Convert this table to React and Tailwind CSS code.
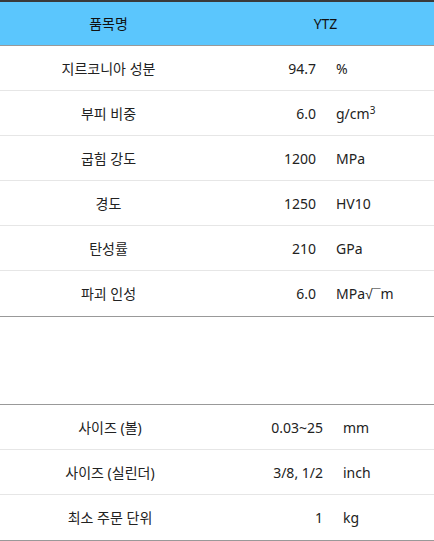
const specs = [
  { label: '지르코니아 성분', value: '94.7', unit: '%' },
  { label: '부피 비중', value: '6.0', unit: <>g/cm<sup className="text-[10px]">3</sup></> },
  { label: '굽힘 강도', value: '1200', unit: 'MPa' },
  { label: '경도', value: '1250', unit: 'HV10' },
  { label: '탄성률', value: '210', unit: 'GPa' },
  {
    label: '파괴 인성',
    value: '6.0',
    unit: <>MPa<span className="font-['Liberation_Sans']">√¯</span>m</>,
  },
]

const sizes = [
  { label: '사이즈 (볼)', value: '0.03~25', unit: 'mm' },
  { label: '사이즈 (실린더)', value: '3/8, 1/2', unit: 'inch' },
  { label: '최소 주문 단위', value: '1', unit: 'kg' },
]

function Row({ row, last, labelW, valueW }) {
  return (
    <div className={`flex h-[45px] items-center ${last ? '' : 'border-b border-[#e6e6e6]'}`}>
      <div className={`${labelW} text-center`}>{row.label}</div>
      <div className={`${valueW} pr-[10px] text-right`}>{row.value}</div>
      <div className="flex-1 pl-[10px]">{row.unit}</div>
    </div>
  )
}

export default function App() {
  return (
    <div
      className="w-[434px] bg-white text-[14px] text-[#222]"
      style={{ fontFamily: '"Noto Sans", "Noto Sans CJK KR", sans-serif' }}
    >
      <div className="border-t-2 border-[#3a3a3a] border-b border-b-[#999]">
        <div className="flex h-[43px] items-center bg-[#5bc6fd] text-[#111]">
          <div className="w-[217px] text-center">품목명</div>
          <div className="flex-1 text-center">YTZ</div>
        </div>
      </div>
      <div className="border-b border-[#999]">
        {specs.map((r, i) => (
          <Row key={r.label} row={r} last={i === specs.length - 1} labelW="w-[217px]" valueW="w-[109px]" />
        ))}
      </div>

      <div className="h-[87px]" />

      <div className="border-y border-[#999]">
        {sizes.map((r, i) => (
          <Row key={r.label} row={r} last={i === sizes.length - 1} labelW="w-[220px]" valueW="w-[113px]" />
        ))}
      </div>
    </div>
  )
}
